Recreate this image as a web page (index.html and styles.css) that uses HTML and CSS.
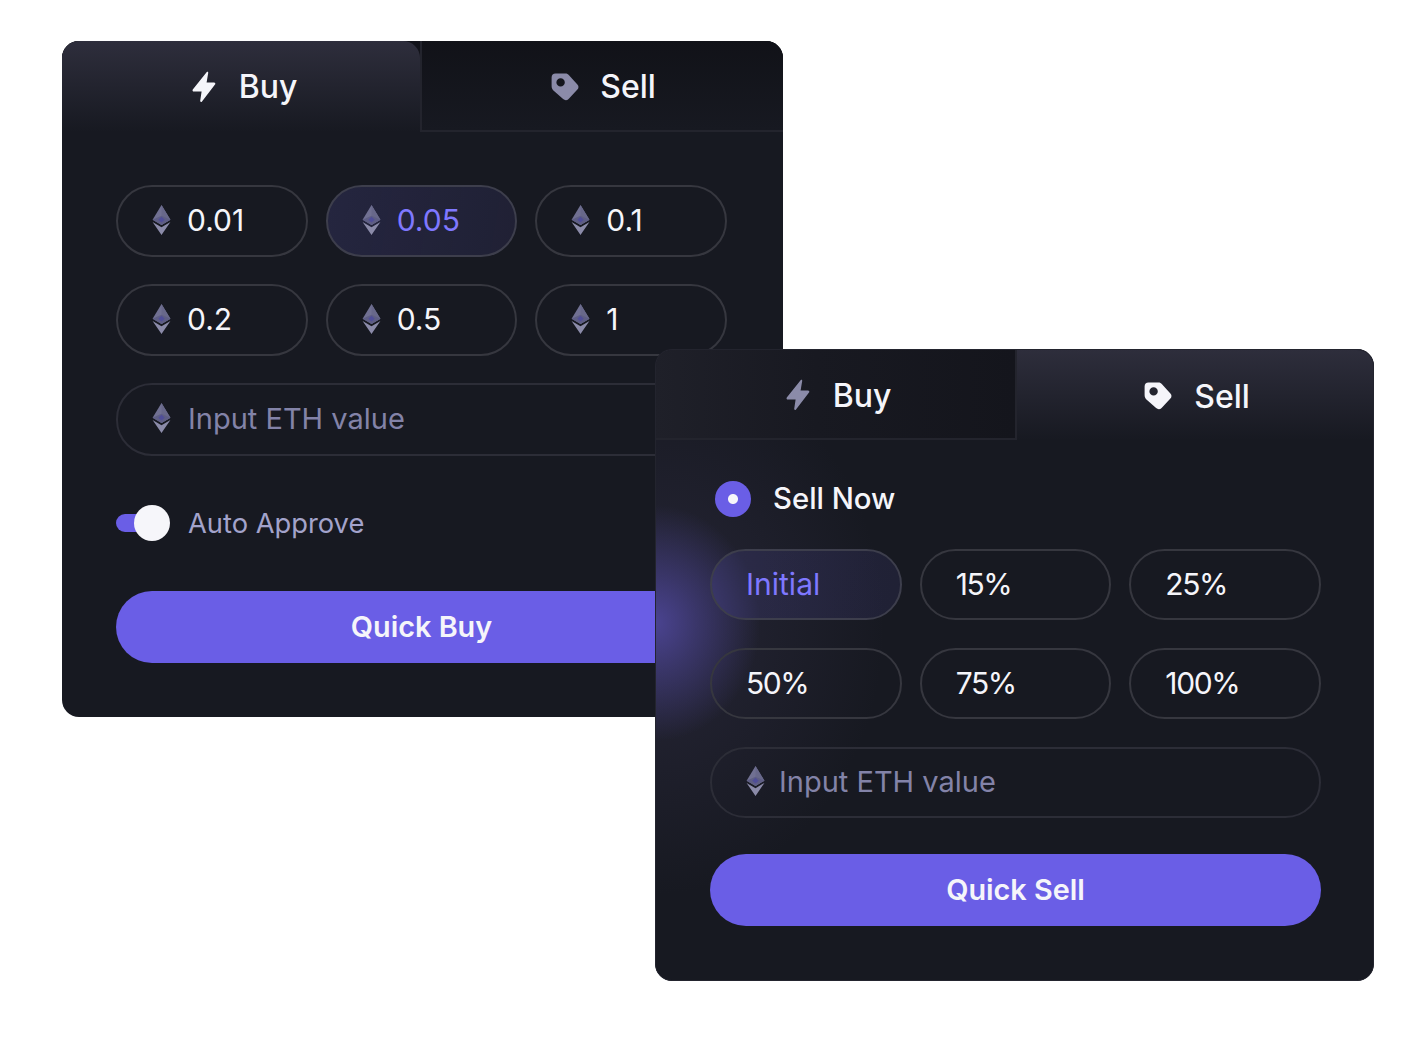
FILE: index.html
```html
<!DOCTYPE html>
<html lang="en">
  <head>
    <meta charset="UTF-8" />
    <meta name="viewport" content="width=device-width, initial-scale=1.0" />
    <title>Quick Buy and Sell</title>
    <link rel="stylesheet" href="styles.css">
  </head>
  <body>
    <svg class="defs" width="0" height="0">
      <symbol id="eth" viewBox="0 0 20 32">
        <path d="M10 0 L19.5 15.6 L10 21.4 L0.5 15.6 Z" fill="#707092" />
        <path d="M10 0 L10 21.4 L19.5 15.6 Z" fill="#68688a" />
        <path d="M10 11.5 L19.5 15.6 L10 21.4 L0.5 15.6 Z" fill="#5e5e84" />
        <path d="M10 12.5 L13.5 15.8 L10 18.6 L6.5 15.8 Z" fill="#504e98" />
        <path d="M0.5 18 L10 23.8 L19.5 18 L10 32 Z" fill="#8b8ba9" />
      </symbol>
      <symbol id="bolt" viewBox="0 0 24 32">
        <path d="M14.6 1.2 C15.4 0.4 16.4 1 16.2 2 L14.6 11.4 L22 11.4 C23.2 11.4 23.8 12.6 23 13.6 L10 30.4 C9.2 31.4 8 30.8 8.2 29.8 L9.6 20.6 L2 20.6 C0.6 20.6 0 19.2 1 18.2 Z" fill="currentColor" />
      </symbol>
      <symbol id="tag" viewBox="0 0 28 28">
        <path fill-rule="evenodd" d="M4.5 0.6 L14.5 0.6 C16 0.6 17 1.1 18 2.2 L26.4 11.4 C27.9 13 27.8 15 26.4 16.5 L17.6 25.9 C16 27.6 13.8 27.6 12.1 26.1 L3 18 C1.4 16.6 0.6 15 0.6 13 L0.6 4.5 C0.6 2.1 2.1 0.6 4.5 0.6 Z M9.6 5.2 A4.2 4.2 0 1 0 9.6 13.6 A4.2 4.2 0 1 0 9.6 5.2 Z" fill="currentColor" />
      </symbol>
    </svg>

    <div class="stage">
      <section class="panel panel--buy">
        <div class="tabs">
          <div class="tab tab--active tab--bolt">
            <svg class="tab__icon tab__icon--bolt"><use href="#bolt" /></svg>
            <span>Buy</span>
          </div>
          <div class="tab tab--idle tab--tag">
            <svg class="tab__icon tab__icon--tag tab__icon--muted"><use href="#tag" /></svg>
            <span>Sell</span>
          </div>
        </div>
        <div class="panel__body">
          <div class="chips">
            <div class="chip"><svg class="eth"><use href="#eth" /></svg>0.01</div>
            <div class="chip chip--active"><svg class="eth"><use href="#eth" /></svg>0.05</div>
            <div class="chip"><svg class="eth"><use href="#eth" /></svg>0.1</div>
            <div class="chip"><svg class="eth"><use href="#eth" /></svg>0.2</div>
            <div class="chip"><svg class="eth"><use href="#eth" /></svg>0.5</div>
            <div class="chip"><svg class="eth"><use href="#eth" /></svg>1</div>
          </div>
          <div class="field"><svg class="eth"><use href="#eth" /></svg>Input ETH value</div>
          <div class="approve">
            <div class="toggle">
              <div class="toggle__track"></div>
              <div class="toggle__knob"></div>
            </div>
            <span>Auto Approve</span>
          </div>
          <div class="action action--buy">Quick Buy</div>
        </div>
      </section>

      <section class="panel panel--sell">
        <div class="tabs">
          <div class="tab tab--idle tab--bolt">
            <svg class="tab__icon tab__icon--bolt tab__icon--muted"><use href="#bolt" /></svg>
            <span>Buy</span>
          </div>
          <div class="tab tab--active tab--tag">
            <svg class="tab__icon tab__icon--tag"><use href="#tag" /></svg>
            <span>Sell</span>
          </div>
        </div>
        <div class="panel__body">
          <div class="sell-now">
            <div class="radio"></div>
            <span>Sell Now</span>
          </div>
          <div class="chips">
            <div class="chip chip--active">Initial</div>
            <div class="chip chip--pct">15%</div>
            <div class="chip chip--pct">25%</div>
            <div class="chip chip--pct">50%</div>
            <div class="chip chip--pct">75%</div>
            <div class="chip chip--pct">100%</div>
          </div>
          <div class="field field--sell"><svg class="eth"><use href="#eth" /></svg>Input ETH value</div>
          <div class="action action--sell">Quick Sell</div>
        </div>
      </section>
    </div>
  </body>
</html>
```

FILE: styles.css
```css
* {
  margin: 0;
  padding: 0;
  box-sizing: border-box;
}

body {
  background: #fff;
  font-family: Inter, "Liberation Sans", sans-serif;
  color: #f5f5fa;
}

.defs {
  position: absolute;
}

.stage {
  position: relative;
  width: 1428px;
  height: 1038px;
  overflow: hidden;
}

.panel {
  position: absolute;
  border-radius: 17px;
  overflow: hidden;
  background-color: #171921;
}

.panel--buy {
  left: 62px;
  top: 41px;
  width: 721px;
  height: 676px;
}

.panel--sell {
  left: 655px;
  top: 349px;
  width: 719px;
  height: 632px;
  background-image:
    radial-gradient(ellipse 105px 118px at 0 274px, #4a4390 0%, rgba(74, 67, 144, 0.58) 40%, rgba(74, 67, 144, 0) 100%),
    radial-gradient(ellipse 230px 270px at 0 276px, rgba(70, 64, 100, 0.32) 0%, rgba(70, 64, 100, 0) 100%);
}

.panel--sell::after {
  content: "";
  position: absolute;
  inset: 0;
  border: 1px solid #23242e;
  border-radius: 17px;
  pointer-events: none;
}

.tabs {
  display: grid;
  grid-template-columns: 358px 1fr;
  height: 91px;
  background: #12131a;
}

.panel--sell .tabs {
  background: none;
  grid-template-columns: 362px 1fr;
}

.tab {
  display: flex;
  align-items: center;
  justify-content: center;
  font-size: 32px;
  font-weight: 500;
}

.tab--bolt {
  gap: 23px;
  padding-left: 7px;
}

.tab--tag {
  gap: 21px;
  padding-left: 2px;
}

.panel--buy .tab--idle {
  padding-top: 2px;
}

.panel--sell .tab {
  padding-top: 3px;
}

.panel--sell .tab--tag {
  gap: 22px;
  padding-left: 3px;
}

.tab--active {
  background: linear-gradient(180deg, #2e2e3c 0%, #171921 100%);
}

.panel--buy .tab--active {
  border-top-right-radius: 17px;
}

.tab--idle {
  background: linear-gradient(180deg, #111218 0%, #171921 100%);
  border-bottom: 2px solid #23242d;
}

.panel--buy .tab--idle {
  border-left: 2px solid #23242d;
}

.panel--sell .tab--idle {
  background: linear-gradient(90deg, #1f2029 0%, #181921 45%, #14151c 100%);
  border-right: 2px solid #23242d;
}

.tab__icon {
  flex: none;
}

.tab__icon--bolt {
  width: 24px;
  height: 32px;
}

.tab__icon--tag {
  width: 28px;
  height: 28px;
}

.tab__icon--muted {
  color: #8b8ba9;
}

.panel__body {
  display: flex;
  flex-direction: column;
  padding: 53px 56px 0 54px;
}

.panel--sell .panel__body {
  padding: 41px 53px 0 55px;
}

.chips {
  display: grid;
  grid-template-columns: repeat(3, 1fr);
  grid-auto-rows: 72px;
  gap: 27px 18px;
}

.panel--sell .chips {
  grid-auto-rows: 71px;
  gap: 28px 18px;
}

.chip,
.field {
  display: flex;
  align-items: center;
  gap: 16px;
  padding: 0 0 2px 34px;
  border: 2px solid #36373f;
  border-radius: 36px;
  font-size: 30px;
}

.chip--active {
  background: linear-gradient(100deg, rgba(85, 80, 170, 0.22) 0%, rgba(85, 80, 170, 0.14) 100%);
  color: #7f78ff;
  border-color: #3d3e4c;
}

.chip--pct {
  letter-spacing: -1.4px;
}

.eth {
  flex: none;
  width: 19px;
  height: 30px;
}

.field {
  height: 73px;
  margin-top: 27px;
  padding-bottom: 3px;
  gap: 17px;
  border-color: #2c2d37;
  color: #8383a8;
  font-size: 29px;
}

.field--sell {
  height: 71px;
  margin-top: 28px;
  gap: 14px;
}

.approve {
  display: flex;
  align-items: center;
  gap: 18px;
  margin-top: 49px;
  font-size: 27.3px;
  color: #a3a3cb;
}

.toggle {
  display: flex;
  align-items: center;
  width: 54px;
  height: 36px;
}

.toggle__track {
  width: 30px;
  height: 18px;
  border-radius: 9px;
  background: #6a5ee6;
}

.toggle__knob {
  flex: none;
  width: 36px;
  height: 36px;
  margin-left: -12px;
  border-radius: 50%;
  background: #f6f6fa;
}

.action {
  display: flex;
  align-items: center;
  justify-content: center;
  height: 72px;
  padding-bottom: 2px;
  border-radius: 36px;
  background: #6a5ee6;
  font-size: 28.8px;
  font-weight: 600;
}

.action--buy {
  margin-top: 50px;
}

.action--sell {
  margin-top: 36px;
}

.sell-now {
  display: flex;
  align-items: center;
  gap: 22px;
  height: 36px;
  margin-bottom: 32px;
  margin-left: 5px;
  padding-bottom: 1px;
  font-size: 29.3px;
  font-weight: 500;
}

.radio {
  flex: none;
  width: 36px;
  height: 36px;
  border-radius: 50%;
  background: radial-gradient(circle, #f6f6fa 0 4.5px, #6a5ee6 5.5px);
}
```
